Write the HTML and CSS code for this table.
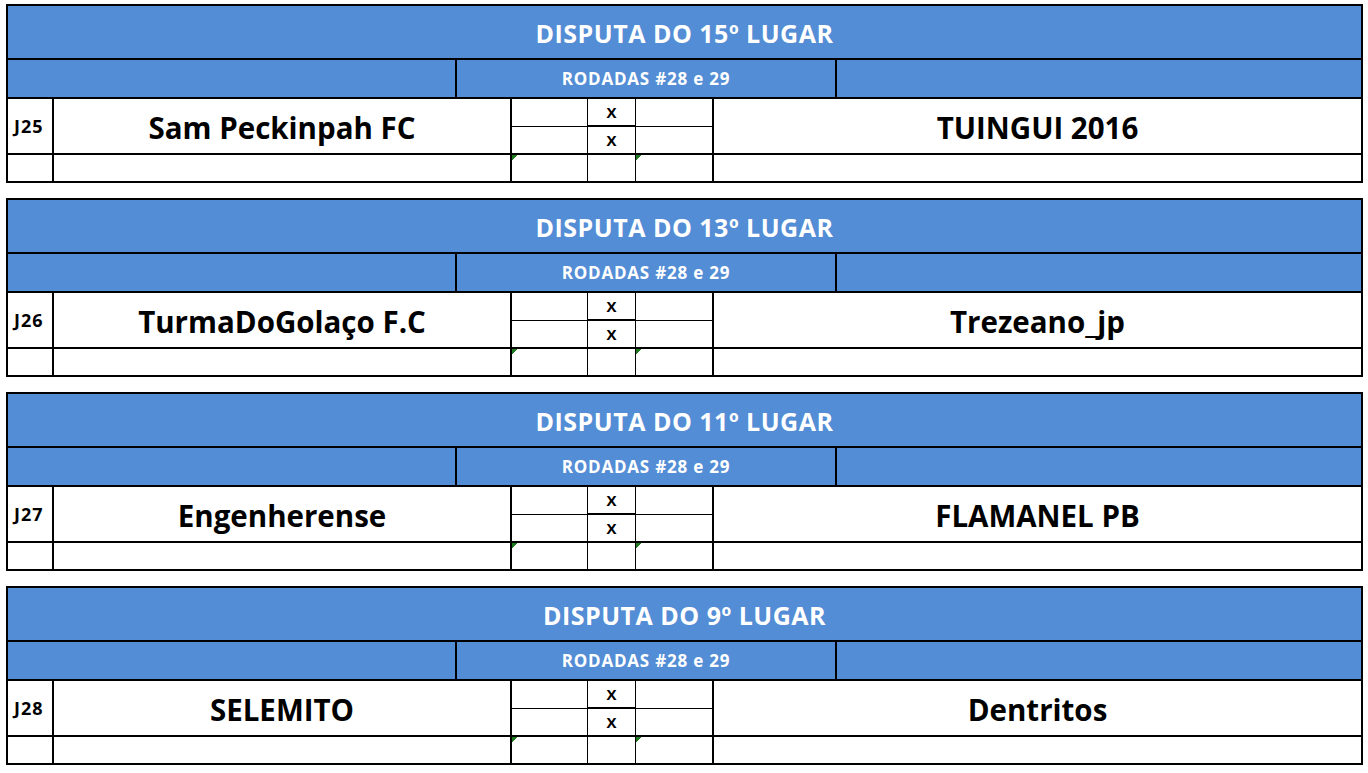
FILE: index.html
```html
<!DOCTYPE html>
<html lang="pt">
<head>
<meta charset="utf-8">
<title>Disputas</title>
<link rel="stylesheet" href="styles.css">
</head>
<body>
<div class="page">

  <section class="block">
    <div class="title">DISPUTA DO 15º LUGAR</div>
    <div class="sub">
      <div class="sub-cell sub-left"></div>
      <div class="sub-cell sub-mid">RODADAS #28 e 29</div>
      <div class="sub-cell"></div>
    </div>
    <div class="match">
      <div class="c jid">J25</div>
      <div class="c team home">Sam Peckinpah FC</div>
      <div class="c s1 r1"></div>
      <div class="c xx r1">X</div>
      <div class="c s2 r1"></div>
      <div class="c team away">TUINGUI 2016</div>
      <div class="c s1 r2"></div>
      <div class="c xx r2">X</div>
      <div class="c s2 r2"></div>
      <div class="c b-j"></div>
      <div class="c b-team"></div>
      <div class="c b-s1 flag"></div>
      <div class="c b-x"></div>
      <div class="c b-s2 flag"></div>
      <div class="c b-away"></div>
    </div>
  </section>

  <section class="block">
    <div class="title">DISPUTA DO 13º LUGAR</div>
    <div class="sub">
      <div class="sub-cell sub-left"></div>
      <div class="sub-cell sub-mid">RODADAS #28 e 29</div>
      <div class="sub-cell"></div>
    </div>
    <div class="match">
      <div class="c jid">J26</div>
      <div class="c team home">TurmaDoGolaço F.C</div>
      <div class="c s1 r1"></div>
      <div class="c xx r1">X</div>
      <div class="c s2 r1"></div>
      <div class="c team away">Trezeano_jp</div>
      <div class="c s1 r2"></div>
      <div class="c xx r2">X</div>
      <div class="c s2 r2"></div>
      <div class="c b-j"></div>
      <div class="c b-team"></div>
      <div class="c b-s1 flag"></div>
      <div class="c b-x"></div>
      <div class="c b-s2 flag"></div>
      <div class="c b-away"></div>
    </div>
  </section>

  <section class="block">
    <div class="title">DISPUTA DO 11º LUGAR</div>
    <div class="sub">
      <div class="sub-cell sub-left"></div>
      <div class="sub-cell sub-mid">RODADAS #28 e 29</div>
      <div class="sub-cell"></div>
    </div>
    <div class="match">
      <div class="c jid">J27</div>
      <div class="c team home">Engenherense</div>
      <div class="c s1 r1"></div>
      <div class="c xx r1">X</div>
      <div class="c s2 r1"></div>
      <div class="c team away">FLAMANEL PB</div>
      <div class="c s1 r2"></div>
      <div class="c xx r2">X</div>
      <div class="c s2 r2"></div>
      <div class="c b-j"></div>
      <div class="c b-team"></div>
      <div class="c b-s1 flag"></div>
      <div class="c b-x"></div>
      <div class="c b-s2 flag"></div>
      <div class="c b-away"></div>
    </div>
  </section>

  <section class="block">
    <div class="title">DISPUTA DO 9º LUGAR</div>
    <div class="sub">
      <div class="sub-cell sub-left"></div>
      <div class="sub-cell sub-mid">RODADAS #28 e 29</div>
      <div class="sub-cell"></div>
    </div>
    <div class="match">
      <div class="c jid">J28</div>
      <div class="c team home">SELEMITO</div>
      <div class="c s1 r1"></div>
      <div class="c xx r1">X</div>
      <div class="c s2 r1"></div>
      <div class="c team away">Dentritos</div>
      <div class="c s1 r2"></div>
      <div class="c xx r2">X</div>
      <div class="c s2 r2"></div>
      <div class="c b-j"></div>
      <div class="c b-team"></div>
      <div class="c b-s1 flag"></div>
      <div class="c b-x"></div>
      <div class="c b-s2 flag"></div>
      <div class="c b-away"></div>
    </div>
  </section>

</div>
</body>
</html>
```

FILE: styles.css
```css
* { box-sizing: border-box; }

html, body {
  margin: 0;
  padding: 0;
  background: #ffffff;
}

body {
  font-family: "Open Sans", Lato, "Liberation Sans", sans-serif;
  font-weight: 700;
  color: #000;
}

.page {
  padding: 4px 5px 0 6px;
  display: flex;
  flex-direction: column;
  gap: 15px;
}

.block {
  width: 1357px;
  border: 2px solid #000;
  display: flex;
  flex-direction: column;
}

.title {
  height: 54px;
  background: #538dd5;
  color: #fff;
  border-bottom: 2px solid #000;
  display: flex;
  align-items: center;
  justify-content: center;
  font-size: 25px;
  letter-spacing: 0.5px;
  padding-top: 2px;
}

.sub {
  height: 39px;
  display: grid;
  grid-template-columns: 449px 380px 1fr;
  background: #538dd5;
  border-bottom: 2px solid #000;
}

.sub-cell {
  display: flex;
  align-items: center;
  justify-content: center;
  color: #fff;
  font-size: 17px;
  letter-spacing: 0.8px;
}

.sub-left, .sub-mid {
  border-right: 2px solid #000;
}

.match {
  display: grid;
  grid-template-columns: 46px 458px 76px 48px 78px 1fr;
  grid-template-rows: 28px 28px 26px;
}

.c {
  display: flex;
  align-items: center;
  justify-content: center;
}

.jid {
  grid-row: 1 / 3;
  grid-column: 1;
  border-right: 2px solid #000;
  border-bottom: 2px solid #000;
  font-size: 18px;
  letter-spacing: 1px;
  justify-content: flex-start;
  padding-left: 6px;
}

.team {
  grid-row: 1 / 3;
  font-size: 29.5px;
  border-bottom: 2px solid #000;
  padding-top: 2px;
}

.home {
  grid-column: 2;
  border-right: 2px solid #000;
}

.away {
  grid-column: 6;
}

.s1 { grid-column: 3; border-right: 1px solid #000; }
.xx { grid-column: 4; border-right: 1px solid #000; font-size: 15px; }
.s2 { grid-column: 5; border-right: 2px solid #000; }

.r1 { grid-row: 1; border-bottom: 1px solid #000; }
.xx.r1 { border-bottom-width: 2px; }
.r2 { grid-row: 2; border-bottom: 2px solid #000; }

.b-j, .b-team, .b-s2 { border-right: 2px solid #000; }
.b-s1, .b-x { border-right: 1px solid #000; }
.b-j { grid-column: 1; }
.b-team { grid-column: 2; }
.b-s1 { grid-column: 3; }
.b-x { grid-column: 4; }
.b-s2 { grid-column: 5; }
.b-away { grid-column: 6; }

.flag {
  background-image: linear-gradient(135deg, #1f7a1f 0, #1f7a1f 3.6px, transparent 3.6px);
  background-size: 6px 6px;
  background-repeat: no-repeat;
  background-position: 0 0;
}
```
